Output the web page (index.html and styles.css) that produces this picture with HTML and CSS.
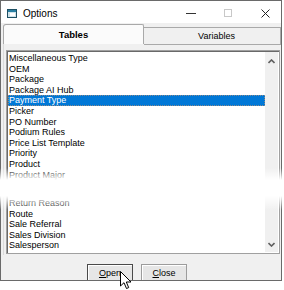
FILE: index.html
```html
<!DOCTYPE html>
<html lang="en">
<head>
    <meta charset="UTF-8">
    <title>Options</title>
    <link rel="stylesheet" href="styles.css">
</head>
<body>

<div class="screen">
    <div class="window">
        <div class="titlebar">
            <svg class="app-icon" width="10" height="9" viewBox="0 0 10 9">
                <rect x="0.5" y="0.5" width="9" height="8" fill="#cfe3ea" stroke="#1d4f63"/>
                <rect x="1" y="1" width="8" height="2" fill="#2a7fa3"/>
                <rect x="3" y="4" width="5" height="3" fill="#ffffff"/>
            </svg>
            <span class="title">Options</span>
            <div class="controls">
                <span class="ctl"><span class="ctl-min"></span></span>
                <span class="ctl"><span class="ctl-max"></span></span>
                <span class="ctl ctl-close">
                    <svg width="9" height="9" viewBox="0 0 9 9">
                        <path d="M0.5 0.5 L8.5 8.5 M8.5 0.5 L0.5 8.5" stroke="#222" stroke-width="1"/>
                    </svg>
                </span>
            </div>
        </div>

        <div class="tabs">
            <div class="tab tab-active">Tables</div>
            <div class="tab tab-other">Variables</div>
        </div>

        <div class="tab-page">
            <div class="listbox">
                <ul class="items">
                    <li>Miscellaneous Type</li>
                    <li>OEM</li>
                    <li>Package</li>
                    <li>Package AI Hub</li>
                    <li class="selected">Payment Type</li>
                    <li>Picker</li>
                    <li>PO Number</li>
                    <li>Podium Rules</li>
                    <li>Price List Template</li>
                    <li>Priority</li>
                    <li>Product</li>
                    <li>Product Major</li>
                    <li class="gap"></li>
                    <li>Return Reason</li>
                    <li>Route</li>
                    <li>Sale Referral</li>
                    <li>Sales Division</li>
                    <li>Salesperson</li>
                </ul>
                <div class="scrollbar">
                    <svg width="7" height="5" viewBox="0 0 7 5">
                        <path d="M0.5 4 L3.5 1 L6.5 4" fill="none" stroke="#606060" stroke-width="1.6"/>
                    </svg>
                    <svg width="7" height="5" viewBox="0 0 7 5">
                        <path d="M0.5 1 L3.5 4 L6.5 1" fill="none" stroke="#606060" stroke-width="1.6"/>
                    </svg>
                </div>
            </div>
        </div>

        <div class="footer">
            <button class="btn btn-default"><u>O</u>pen</button>
            <button class="btn"><u>C</u>lose</button>
        </div>
    </div>

    <!-- torn part of the screenshot -->
    <div class="tear"></div>

    <svg class="cursor" width="13" height="19" viewBox="0 0 13 19">
        <path d="M0.5 0.5 L0.5 15 L4 11.7 L6.5 17.5 L8.7 16.6 L6.3 11 L11 11 Z" fill="#fff" stroke="#000" stroke-width="1" stroke-linejoin="round"/>
    </svg>
</div>

</body>
</html>
```

FILE: styles.css
```css
body {
    margin: 0;
    background-color: #fff;
    font-family: "Liberation Sans", Arial, sans-serif;
    color: #000;
}

.screen {
    position: relative;
    width: 284px;
    height: 290px;
    overflow: hidden;
}

.window {
    width: 282px;
    height: 281px;
    box-sizing: border-box;
    border: 1px solid #6a6a6a;
    background-color: #f0f0f0;
    display: flex;
    flex-direction: column;
    overflow: hidden;
}

/* title bar */
.titlebar {
    height: 22px;
    flex: none;
    background-color: #fff;
    display: flex;
    align-items: center;
}

.app-icon {
    margin-left: 6px;
    margin-top: 3px;
}

.title {
    margin-left: 6px;
    margin-top: 3px;
    font-size: 10px;
}

.controls {
    margin-left: auto;
    display: flex;
    height: 100%;
}

.ctl {
    width: 37px;
    display: flex;
    align-items: center;
    justify-content: center;
    padding-top: 2px;
}

.ctl-min {
    width: 10px;
    height: 1px;
    margin-top: 1px;
    background-color: #333;
}

.ctl-max {
    width: 6px;
    height: 6px;
    border: 1px solid #c8c8c8;
}

.ctl-close {
    width: 32px;
    padding-left: 3px;
}

/* tabs */
.tabs {
    height: 21px;
    flex: none;
    display: flex;
    align-items: flex-end;
    padding-left: 2px;
    font-size: 9px;
}

.tab {
    box-sizing: border-box;
    display: flex;
    align-items: center;
    justify-content: center;
}

.tab-active {
    width: 141px;
    height: 20px;
    background-color: #fbfbfb;
    border: 1px solid #a9a9a9;
    border-bottom: none;
    border-radius: 3px 2px 0 0;
    font-weight: bold;
    font-size: 9.5px;
    position: relative;
    z-index: 1;
}

.tab-other {
    flex: 1;
    height: 18px;
    margin-bottom: -1px;
    padding-left: 9px;
    background-color: #f0f0f0;
    border: 1px solid #a9a9a9;
    border-left: none;
}

.tab-page {
    flex: none;
    margin-left: 2px;
    border-left: 1px solid #dadada;
    padding: 6px 1px 1px 2px;
}

/* list */
.listbox {
    width: 274px;
    height: 204px;
    box-sizing: border-box;
    border: 1px solid #a0a0a0;
    box-shadow: inset 1px 1px 0 #696969;
    background-color: #fff;
    display: flex;
}

.items {
    list-style: none;
    margin: 0;
    padding: 2px 0 0 1px;
    flex: 1;
    font-size: 9px;
}

.items li {
    height: 10.6px;
    line-height: 10.6px;
    padding-left: 1px;
    white-space: nowrap;
}

.items li.selected {
    background-color: #0078d7;
    color: #fff;
    outline: 1px dotted #8a8a8a;
    outline-offset: -1px;
}

.items li.gap {
    height: 17.8px;
}

.scrollbar {
    width: 13px;
    margin: 1px 1px 1px 0;
    background-color: #f0f0f0;
    display: flex;
    flex-direction: column;
    justify-content: space-between;
    align-items: center;
    padding: 7px 0 5px;
    box-sizing: border-box;
}

/* buttons */
.footer {
    flex: 1;
    display: flex;
    gap: 8px;
    padding: 9px 0 0 86px;
}

.btn {
    width: 46px;
    height: 21px;
    flex: none;
    padding: 0 0 3px;
    background-color: #e6e6e6;
    border: 1px solid #9c9c9c;
    box-shadow: inset 1px 1px 0 #fff;
    font-family: "Liberation Sans", Arial, sans-serif;
    font-size: 9px;
    color: #000;
}

.btn-default {
    border-color: #4a4a4a;
}

/* overlays */
.tear {
    position: absolute;
    left: 0;
    top: 168px;
    width: 284px;
    height: 42px;
    background: linear-gradient(to bottom, rgba(255, 255, 255, 0) 0, #fff 12px, #fff 28px, rgba(255, 255, 255, 0) 42px);
}

.cursor {
    position: absolute;
    left: 120px;
    top: 271px;
}
```
